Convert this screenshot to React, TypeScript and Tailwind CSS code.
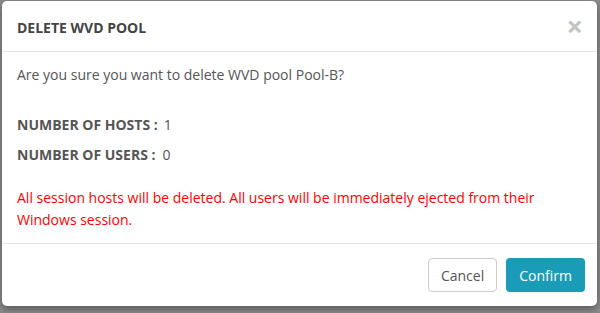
import React from 'react';

const App = () => {
    return (
        <div className="w-[600px] h-[313px] bg-[#8c8c8c] pl-[2px] pr-[3px] pt-[1px] pb-[7px] font-['Open_Sans',sans-serif]">
            <div className="h-full bg-white rounded-[5px] flex flex-col shadow-[0_3px_8px_rgba(0,0,0,0.4)]">
                <div className="h-[51px] flex items-center justify-between pl-[15px] pr-[14px] pt-[2px] border-b border-[#e5e5e5]">
                    <h4 className="text-[14px] font-bold text-[#444]">DELETE WVD POOL</h4>
                    <button className="text-[29px] leading-none font-bold text-[#c4c4c4] -mt-[4px]">×</button>
                </div>
                <div className="flex-1 px-[15px] pt-[13px] text-[14px] text-[#555] border-b border-[#e5e5e5]">
                    <p className="leading-[20px]">Are you sure you want to delete WVD pool Pool-B?</p>
                    <div className="mt-[30px] flex flex-col gap-[10px] leading-[20px]">
                        <div>
                            <span className="font-bold">NUMBER OF HOSTS :</span>
                            <span className="ml-[6px]">1</span>
                        </div>
                        <div>
                            <span className="font-bold">NUMBER OF USERS :</span>
                            <span className="ml-[7px]">0</span>
                        </div>
                    </div>
                    <p className="mt-[22px] leading-[22px] text-[#f00]">
                        All session hosts will be deleted. All users will be immediately ejected from their Windows session.
                    </p>
                </div>
                <div className="h-[62px] flex items-center justify-end gap-[9px] pr-[12px]">
                    <button className="h-[34px] px-[12px] border border-[#ccc] rounded-[4px] text-[14px] text-[#555] bg-white">Cancel</button>
                    <button className="h-[34px] px-[13px] rounded-[4px] text-[14px] text-white bg-[#1a9bb7]">Confirm</button>
                </div>
            </div>
        </div>
    );
};

export default App;
